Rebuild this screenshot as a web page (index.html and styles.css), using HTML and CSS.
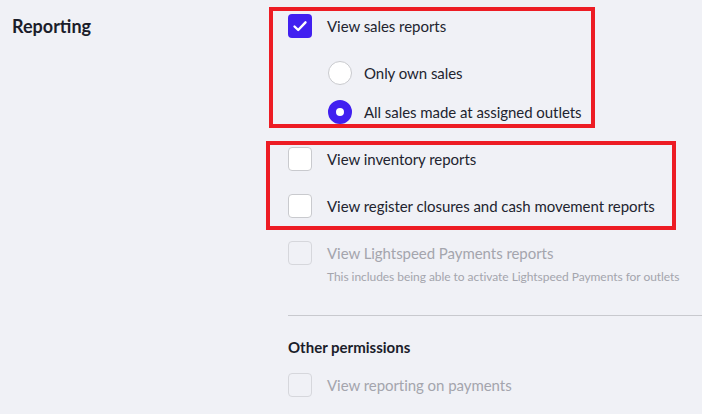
FILE: index.html
```html
<!DOCTYPE html>
<html lang="en">
<head>
    <meta charset="UTF-8">
    <meta name="viewport" content="width=device-width, initial-scale=1.0">
    <title>User permissions - Reporting</title>
    <link rel="stylesheet" href="styles.css">
</head>
<body>
    <div class="section">
        <h2 class="section-title">Reporting</h2>

        <div class="options">
            <label class="option">
                <span class="checkbox checked">
                    <svg viewBox="0 0 24 24" width="24" height="24"><path d="M6.5 12.5 L10.2 16 L17.5 8.3" fill="none" stroke="#fff" stroke-width="2.4" stroke-linecap="round" stroke-linejoin="round"/></svg>
                </span>
                View sales reports
            </label>

            <div class="sub-options">
                <label class="option radio-option">
                    <span class="radio"></span>
                    Only own sales
                </label>
                <label class="option radio-option">
                    <span class="radio selected"></span>
                    All sales made at assigned outlets
                </label>
            </div>

            <label class="option spaced">
                <span class="checkbox"></span>
                View inventory reports
            </label>

            <label class="option spaced">
                <span class="checkbox"></span>
                View register closures and cash movement reports
            </label>

            <label class="option spaced disabled">
                <span class="checkbox"></span>
                View Lightspeed Payments reports
            </label>
            <p class="hint">This includes being able to activate Lightspeed Payments for outlets</p>

            <hr class="divider">

            <h3 class="group-title">Other permissions</h3>
            <label class="option disabled">
                <span class="checkbox"></span>
                View reporting on payments
            </label>

            <!-- highlight frames drawn on top of the option groups -->
            <div class="highlight highlight-sales"></div>
            <div class="highlight highlight-other"></div>
        </div>
    </div>
</body>
</html>
```

FILE: styles.css
```css
body {
    margin: 0;
    background-color: #f0f1f6;
    font-family: Lato, "Open Sans", Arial, sans-serif;
    color: #1f2130;
}
.section {
    display: grid;
    grid-template-columns: 288px 1fr;
    height: 414px;
    overflow: hidden;
}
.section-title {
    margin: 0;
    padding: 14px 0 0 12px;
    font-size: 18px;
    font-weight: 700;
    line-height: 24px;
    color: #1b1d2a;
}
.options {
    position: relative;
    padding-top: 14px;
}
.option {
    display: flex;
    align-items: center;
    gap: 15px;
    height: 24px;
    font-size: 15px;
    line-height: 24px;
    letter-spacing: -0.05px;
    color: #22242f;
}
.option.spaced {
    margin-top: 23px;
}
.sub-options {
    padding-left: 40px;
    margin-top: 23px;
}
.radio-option {
    gap: 12px;
}
.radio-option + .radio-option {
    margin-top: 15px;
}
.checkbox {
    flex: none;
    width: 24px;
    height: 24px;
    box-sizing: border-box;
    border: 1px solid #c9cace;
    border-radius: 4px;
    background: #fff;
}
.checkbox svg {
    display: block;
}
.checkbox.checked {
    border: none;
    background: #4120f0;
}
.radio {
    flex: none;
    width: 24px;
    height: 24px;
    box-sizing: border-box;
    border: 1px solid #c9cace;
    border-radius: 50%;
    background: #fff;
}
.radio.selected {
    border: 8px solid #4120f0;
}
.disabled {
    color: #a4a5ad;
}
.disabled .checkbox {
    border-color: #d6d7dc;
    background: transparent;
}
.hint {
    margin: 4px 0 0 39px;
    font-size: 12px;
    line-height: 16px;
    letter-spacing: -0.05px;
    color: #a4a5ad;
}
.divider {
    margin: 30px 0 0;
    border: none;
    border-top: 1px solid #c8c9ce;
}
.group-title {
    margin: 21px 0 16px;
    font-size: 15px;
    font-weight: 700;
    line-height: 20px;
    color: #1b1d2a;
}
.highlight {
    position: absolute;
    box-sizing: border-box;
    border: 4px solid #ed1c24;
}
.highlight-sales {
    left: -19px;
    top: 7px;
    width: 326px;
    height: 121px;
}
.highlight-other {
    left: -22px;
    top: 141px;
    width: 410px;
    height: 89px;
}
```
